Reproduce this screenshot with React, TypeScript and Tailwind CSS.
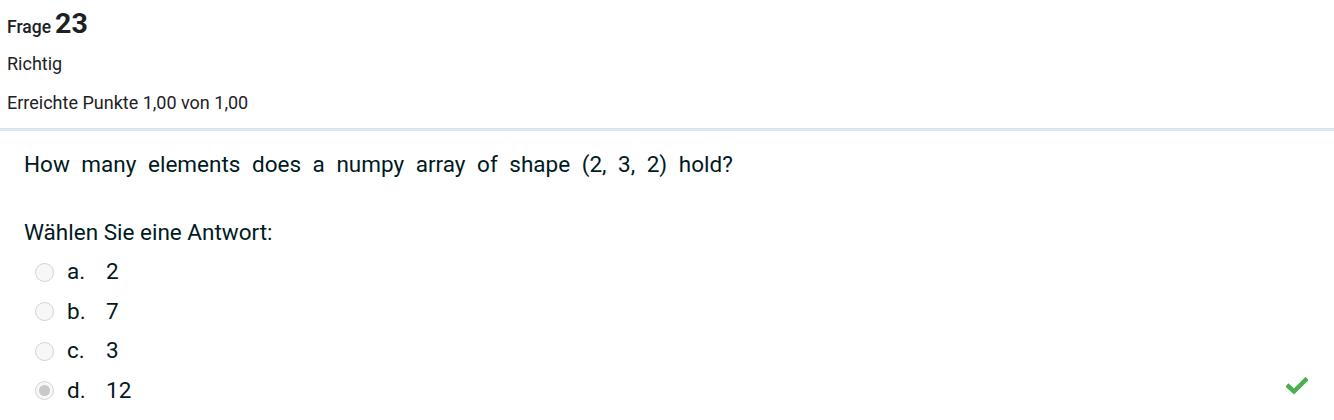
import React from "react";

const options = [
  { l: "a.", v: "2", checked: false },
  { l: "b.", v: "7", checked: false },
  { l: "c.", v: "3", checked: false },
  { l: "d.", v: "12", checked: true },
];

export default function App() {
  return (
    <div className="w-[1334px] h-[420px] bg-white text-[#1d2125] overflow-hidden" style={{ fontFamily: "Roboto, 'Liberation Sans', sans-serif" }}>
      <div className="pl-[7px] pt-[3px] h-[128px]">
        <div className="flex items-baseline h-[30px]">
          <span className="text-[17.5px] font-medium">Frage</span>
          <span className="text-[28.5px] font-bold ml-[4px]">23</span>
        </div>
        <div className="text-[18px] mt-[18px] leading-[26px]">Richtig</div>
        <div className="text-[18px] mt-[13px] leading-[26px]">Erreichte Punkte 1,00 von 1,00</div>
      </div>
      <div className="h-[1px] bg-[#dee2e6]" />
      <div className="h-[2px] bg-[#d4ebf1]" />
      <div className="pl-[24px] text-[#001a1e] relative">
        <div className="text-[22.5px] mt-[17px] [word-spacing:6px]">How many elements does a numpy array of shape (2, 3, 2) hold?</div>
        <div className="text-[22.5px] mt-[34px]">Wählen Sie eine Antwort:</div>
        <div className="mt-[3px] flex flex-col">
          {options.map((o) => (
            <div key={o.l} className="flex items-center h-[39.5px] text-[22.5px]">
              <div className="ml-[11px] w-[19px] h-[19px] rounded-full border border-[#d4d4d4] bg-[#f7f7f7] flex items-center justify-center">
                {o.checked && <div className="w-[11px] h-[11px] rounded-full bg-[#c8c8c8]" />}
              </div>
              <span className="ml-[13px] w-[39px]">{o.l}</span>
              <span>{o.v}</span>
            </div>
          ))}
        </div>
        <svg className="absolute left-[1286px] top-[229px]" width="22" height="18" viewBox="0 0 22 18">
          <path d="M2.5 9.5 L8 14.5 L19.5 3" fill="none" stroke="#4caf50" strokeWidth="4.5" strokeLinecap="square" />
        </svg>
      </div>
    </div>
  );
}
